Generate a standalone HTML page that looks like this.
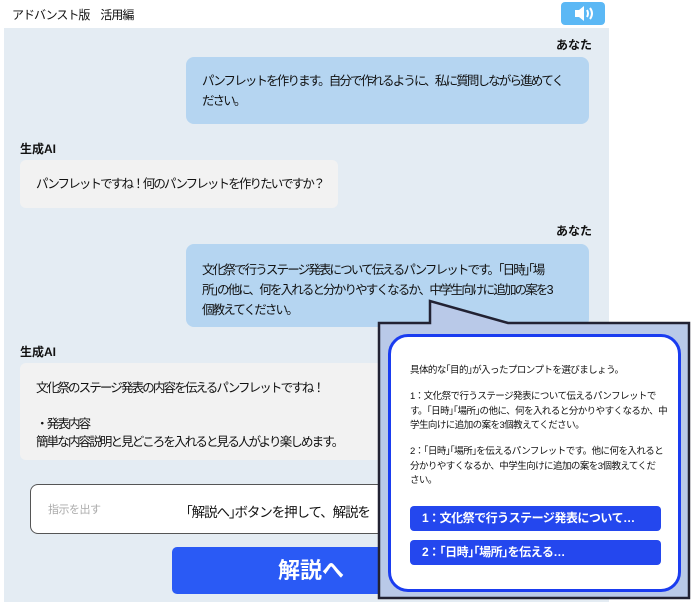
<!DOCTYPE html><html><head><meta charset="utf-8"><style>
*{margin:0;padding:0;box-sizing:border-box}
body{width:700px;height:606px;background:#fff;font-family:"Liberation Sans","Noto Sans CJK JP",sans-serif;position:relative;overflow:hidden;color:#111}
.a{position:absolute}
.panel{left:4px;top:28px;width:605px;height:574px;background:#e4ecf3}
.me{background:#b5d5f1;border-radius:8px;font-size:12.5px;letter-spacing:-1.85px;line-height:20px;padding:0 16px;white-space:nowrap}
.ai{background:#f2f2f2;border-radius:6px;font-size:12.5px;letter-spacing:-1.85px;line-height:18px;padding:0 16px;white-space:nowrap}
.lab{font-size:12px;font-weight:bold}
.pt{font-size:9.5px;letter-spacing:-0.55px;line-height:14.5px;left:410px;white-space:nowrap;color:#111}
.btn{left:410px;width:251px;height:25px;background:#2447ee;border-radius:4px;color:#fff;font-weight:bold;font-size:12px;line-height:25px;padding-left:12px;letter-spacing:-0.5px}
</style></head><body>
<div class="a" style="left:12px;top:6px;font-size:12px;letter-spacing:-1px">アドバンスト版　活用編</div>
<div class="a" style="left:561px;top:2px;width:44px;height:23px;background:#5bb8f5;border-radius:4px">
<svg width="44" height="23"><path d="M14 8h4l5-4v15l-5-4h-4z" fill="#fff"/><path d="M26 8q2 3.5 0 7M29 6q4 5.5 0 11" stroke="#fff" stroke-width="2" fill="none"/></svg></div>
<div class="a panel"></div>
<div class="a lab" style="left:556px;top:36px">あなた</div>
<div class="a me" style="left:186px;top:57px;width:403px;height:67px;padding-top:14px">パンフレットを作ります。自分で作れるように、私に質問しながら進めてく<br>ださい。</div>
<div class="a lab" style="left:20px;top:140px">生成AI</div>
<div class="a ai" style="left:20px;top:160px;width:318px;height:48px;padding-top:15px">パンフレットですね！何のパンフレットを作りたいですか？</div>
<div class="a lab" style="left:556px;top:222px">あなた</div>
<div class="a me" style="left:186px;top:244px;width:403px;height:83px;padding-top:16px">文化祭で行うステージ発表について伝えるパンフレットです。｢日時｣｢場<br>所｣の他に、何を入れると分かりやすくなるか、中学生向けに追加の案を3<br>個教えてください。</div>
<div class="a lab" style="left:20px;top:343px">生成AI</div>
<div class="a ai" style="left:20px;top:363px;width:370px;height:97px;padding-top:16px">文化祭のステージ発表の内容を伝えるパンフレットですね！<br><br>・発表内容<br>簡単な内容説明と見どころを入れると見る人がより楽しめます。</div>
<div class="a" style="left:30px;top:484px;width:360px;height:50px;border:1.5px solid #555;border-radius:8px;background:#fff"></div>
<div class="a" style="left:48px;top:501px;font-size:11px;color:#aaa;letter-spacing:-0.5px">指示を出す</div>
<div class="a" style="left:176px;top:495px;width:220px;height:36px;background:#fff;border-radius:6px;font-size:13.5px;letter-spacing:-1.1px;line-height:36px;padding-left:10px;white-space:nowrap;overflow:hidden">｢解説へ｣ボタンを押して、解説を</div>
<div class="a" style="left:172px;top:547px;width:220px;height:47px;background:#2a5af5;border-radius:5px;color:#fff;font-weight:bold;font-size:22px;line-height:47px;padding-left:106px">解説へ</div>
<svg class="a" style="left:376px;top:298px" width="318" height="304">
<path d="M3 25H54V3L132 25H313V300H3Z" fill="#b9c9e8" stroke="#223" stroke-width="2.5"/>
</svg>
<div class="a" style="left:388px;top:334px;width:293px;height:258px;background:#fff;border:3px solid #1a3cf0;border-radius:20px"></div>
<div class="a pt" style="top:364px">具体的な｢目的｣が入ったプロンプトを選びましょう。</div>
<div class="a pt" style="top:390px">1：文化祭で行うステージ発表について伝えるパンフレットで<br>す。｢日時｣｢場所｣の他に、何を入れると分かりやすくなるか、中<br>学生向けに追加の案を3個教えてください。</div>
<div class="a pt" style="top:445px">2：｢日時｣｢場所｣を伝えるパンフレットです。他に何を入れると<br>分かりやすくなるか、中学生向けに追加の案を3個教えてくだ<br>さい。</div>
<div class="a btn" style="top:506px">1：文化祭で行うステージ発表について…</div>
<div class="a btn" style="top:540px">2：｢日時｣｢場所｣を伝える…</div>
</body></html>
